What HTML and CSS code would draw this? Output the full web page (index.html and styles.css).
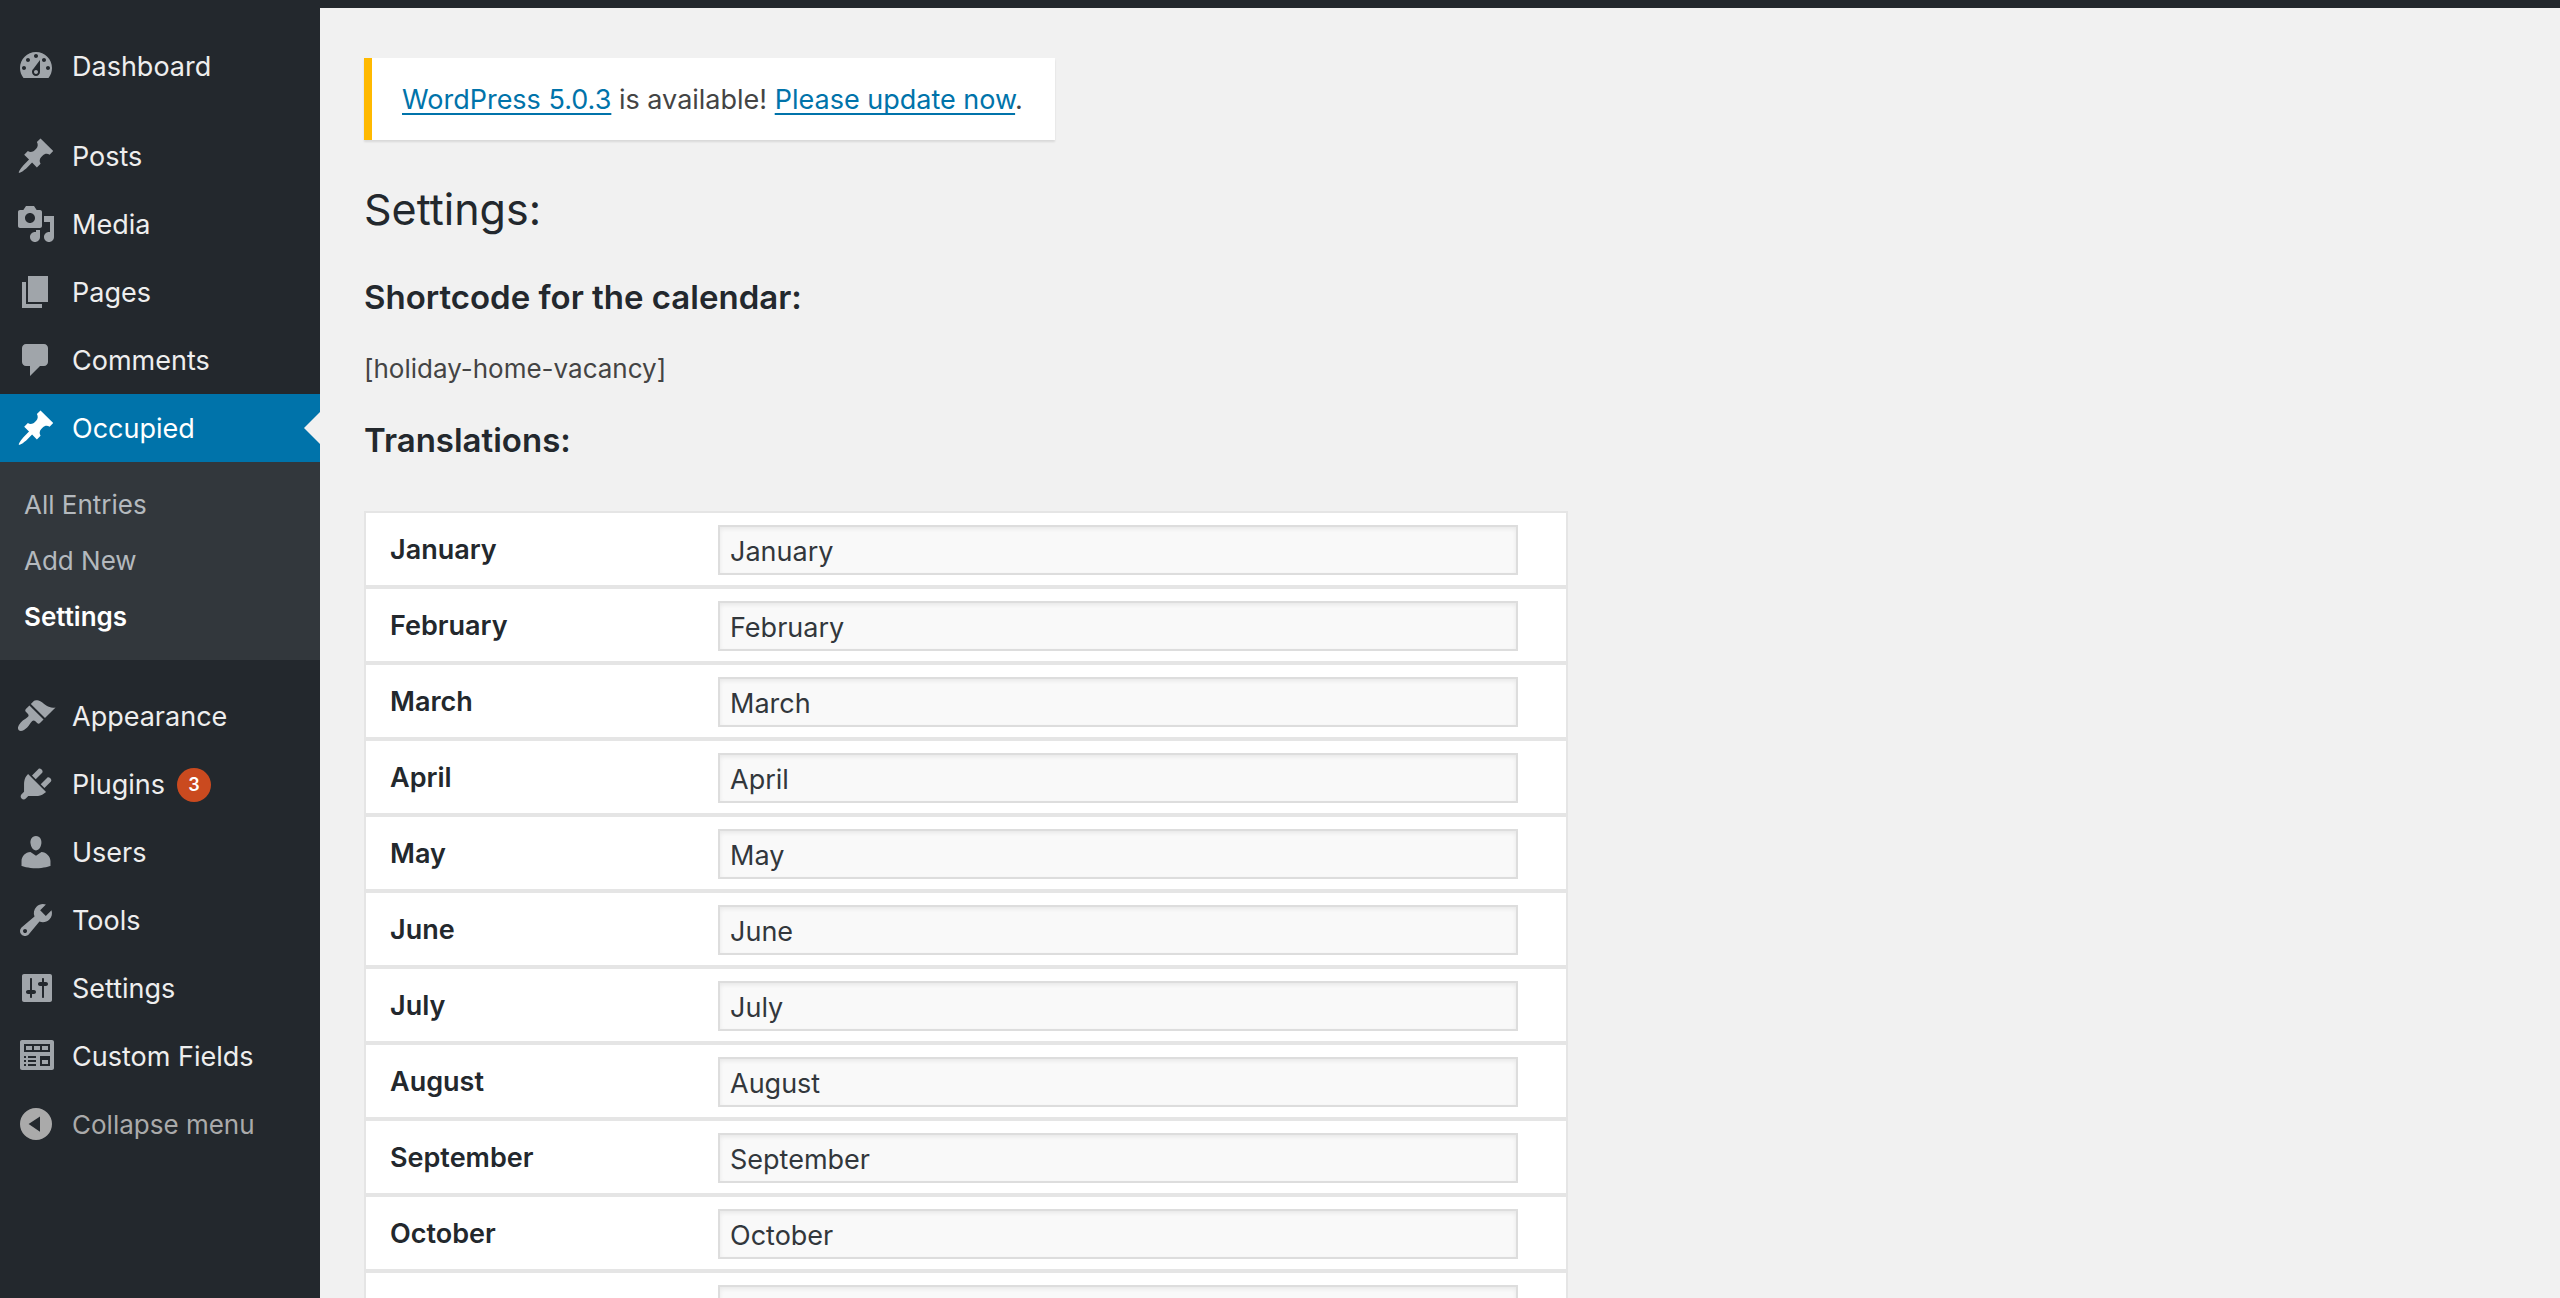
FILE: index.html
```html
<!DOCTYPE html>
<html lang="en">
<head>
<meta charset="utf-8">
<title>Settings</title>
<link rel="stylesheet" href="styles.css">
</head>
<body>
<div class="toolbar"></div>
<div class="layout">
  <nav class="sidebar" aria-label="Main menu">
    <ul class="menu">
      <li><a class="menu-link" href="#"><svg class="icon" viewBox="0 0 20 20" aria-hidden="true"><path fill-rule="evenodd" d="M3.76 16h12.48c1.1-1.37 1.76-3.11 1.76-5 0-4.42-3.58-8-8-8s-8 3.58-8 8c0 1.89.66 3.63 1.76 5zM10 4c.55 0 1 .45 1 1s-.45 1-1 1-1-.45-1-1 .45-1 1-1zM6 6c.55 0 1 .45 1 1s-.45 1-1 1-1-.45-1-1 .45-1 1-1zm8 0c.55 0 1 .45 1 1s-.45 1-1 1-1-.45-1-1 .45-1 1-1zm-5.370 5.550L12 7v6c0 1.100-.9 2-2 2s-2-.9-2-2c0-.57.24-1.080.63-1.450zM4 10c.55 0 1 .45 1 1s-.45 1-1 1-1-.45-1-1 .45-1 1-1zm12 0c.55 0 1 .45 1 1s-.45 1-1 1-1-.45-1-1 .45-1 1-1zm-5 3c0-.55-.45-1-1-1s-1 .45-1 1 .45 1 1 1 1-.45 1-1z"/></svg><span class="label">Dashboard</span></a></li>
      <li class="group-start"><a class="menu-link" href="#"><svg class="icon" viewBox="0 0 20 20" aria-hidden="true"><path d="M10.440 3.020l1.820-1.820 6.360 6.350-1.830 1.820c-1.050-.68-2.480-.57-3.410.36l-.75.75c-.92.93-1.040 2.350-.35 3.410l-1.830 1.820-2.410-2.410-2.800 2.790c-.42.42-3.380 2.710-3.800 2.290s1.860-3.390 2.280-3.810l2.790-2.790L4.100 9.360l1.830-1.820c1.050.69 2.480.57 3.400-.36l.75-.75c.93-.92 1.050-2.350.36-3.410z"/></svg><span class="label">Posts</span></a></li>
      <li><a class="menu-link" href="#"><svg class="icon" viewBox="0 0 20 20" aria-hidden="true"><path fill-rule="evenodd" d="M13 11V4c0-.55-.45-1-1-1h-1.670L9 1H5L3.670 3H2c-.55 0-1 .45-1 1v7c0 .55.45 1 1 1h10c.55 0 1-.45 1-1zM7 4.500c1.380 0 2.500 1.120 2.500 2.500S8.380 9.500 7 9.500 4.500 8.380 4.500 7 5.620 4.500 7 4.500zM14 6h5v10.500c0 1.380-1.120 2.500-2.500 2.500S14 17.880 14 16.500s1.120-2.500 2.500-2.500c.17 0 .34.02.5.05V9h-3V6zm-4 8.050V13h2v3.500c0 1.380-1.120 2.500-2.500 2.500S7 17.880 7 16.500 8.120 14 9.500 14c.17 0 .34.02.5.05z"/></svg><span class="label">Media</span></a></li>
      <li><a class="menu-link" href="#"><svg class="icon" viewBox="0 0 20 20" aria-hidden="true"><path d="M6 15V2h10v13H6zm-1 1h8v2H3V5h2v11z"/></svg><span class="label">Pages</span></a></li>
      <li><a class="menu-link" href="#"><svg class="icon" viewBox="0 0 20 20" aria-hidden="true"><path d="M5 2h9c1.100 0 2 .9 2 2v7c0 1.100-.9 2-2 2h-2l-5 5v-5H5c-1.100 0-2-.9-2-2V4c0-1.100.9-2 2-2z"/></svg><span class="label">Comments</span></a></li>
      <li><a class="menu-link current" href="#"><svg class="icon" viewBox="0 0 20 20" aria-hidden="true"><path d="M10.440 3.020l1.820-1.820 6.360 6.350-1.830 1.820c-1.050-.68-2.480-.57-3.410.36l-.75.75c-.92.93-1.040 2.350-.35 3.410l-1.830 1.820-2.410-2.410-2.800 2.790c-.42.42-3.380 2.710-3.800 2.290s1.860-3.390 2.280-3.810l2.790-2.790L4.100 9.360l1.830-1.820c1.050.69 2.480.57 3.400-.36l.75-.75c.93-.92 1.050-2.350.36-3.410z"/></svg><span class="label">Occupied</span></a>
        <ul class="submenu">
          <li><a href="#">All Entries</a></li>
          <li><a href="#">Add New</a></li>
          <li><a class="active" href="#" aria-current="page">Settings</a></li>
        </ul>
      </li>
      <li class="group-start"><a class="menu-link" href="#"><svg class="icon" viewBox="0 0 20 20" aria-hidden="true"><path d="M14.480 11.060L7.410 3.990l1.500-1.500c.5-.56 2.300-.47 3.510.32 1.210.8 1.430 1.280 2.910 2.100 1.180.64 2.450 1.260 4.450.85zm-.71.71L6.700 4.700 4.930 6.470c-.39.39-.39 1.020 0 1.410l1.060 1.060c.39.39.39 1.030 0 1.420-.6.6-1.430 1.110-2.210 1.690-.35.26-.7.53-1.010.84C1.430 14.230.4 16.080 1.400 17.070c.99 1 2.840-.03 4.180-1.360.31-.31.58-.66.85-1.020.57-.78 1.080-1.610 1.690-2.210.39-.39 1.020-.39 1.410 0l1.060 1.060c.39.39 1.020.39 1.410 0z"/></svg><span class="label">Appearance</span></a></li>
      <li><a class="menu-link" href="#"><svg class="icon" viewBox="0 0 20 20" aria-hidden="true"><path d="M13.110 4.360L9.870 7.600 8 5.730l3.240-3.240c.35-.34 1.050-.2 1.560.32.52.51.66 1.210.31 1.550zm-8 1.770l.91-1.120 9.010 9.010-1.190.84c-.71.71-2.630 1.160-3.820 1.160H6.140L4.900 17.260c-.59.59-1.540.59-2.120 0-.59-.58-.59-1.530 0-2.120l1.240-1.240v-3.880c0-1.130.4-3.190 1.090-3.890zm7.260 3.970l3.240-3.240c.34-.35 1.040-.21 1.550.31.52.51.66 1.210.31 1.550l-3.240 3.250z"/></svg><span class="label">Plugins</span><span class="badge">3</span></a></li>
      <li><a class="menu-link" href="#"><svg class="icon" viewBox="0 0 20 20" aria-hidden="true"><path d="M10 9.250c-2.270 0-2.730-3.440-2.730-3.440C7 4.020 7.820 2 9.970 2c2.160 0 2.980 2.020 2.710 3.810 0 0-.41 3.440-2.680 3.440zm0 2.570L12.720 10c2.390 0 4.520 2.330 4.520 4.530v2.490s-3.650 1.130-7.240 1.130c-3.650 0-7.240-1.130-7.240-1.130v-2.490c0-2.250 1.940-4.480 4.470-4.480z"/></svg><span class="label">Users</span></a></li>
      <li><a class="menu-link" href="#"><svg class="icon" viewBox="0 0 20 20" aria-hidden="true"><path fill-rule="evenodd" d="M16.680 9.770c-1.340 1.340-3.300 1.670-4.950.99l-5.410 6.520c-.99.99-2.590.99-3.580 0s-.99-2.590 0-3.570l6.520-5.420c-.68-1.650-.35-3.610.99-4.950 1.280-1.280 3.120-1.620 4.720-1.060l-2.890 2.890 2.820 2.820 2.860-2.870c.53 1.580.18 3.390-1.080 4.650zM3.810 16.210c.4.39 1.040.39 1.430 0 .4-.4.4-1.040 0-1.430-.39-.4-1.030-.4-1.430 0-.39.39-.39 1.030 0 1.430z"/></svg><span class="label">Tools</span></a></li>
      <li><a class="menu-link" href="#"><svg class="icon" viewBox="0 0 20 20" aria-hidden="true"><path fill-rule="evenodd" d="M18 16V4c0-.55-.45-1-1-1H4c-.55 0-1 .45-1 1v12c0 .55.45 1 1 1h13c.55 0 1-.45 1-1zM8 11h1c.55 0 1 .45 1 1s-.45 1-1 1H8v1.500c0 .28-.22.5-.5.5s-.5-.22-.5-.5V13H6c-.55 0-1-.45-1-1s.45-1 1-1h1V5.500c0-.28.22-.5.5-.5s.5.22.5.5V11zm5-2h-1c-.55 0-1-.45-1-1s.45-1 1-1h1V5.500c0-.28.22-.5.5-.5s.5.22.5.5V7h1c.55 0 1 .45 1 1s-.45 1-1 1h-1v5.500c0 .28-.22.5-.5.5s-.5-.22-.5-.5V9z"/></svg><span class="label">Settings</span></a></li>
      <li><a class="menu-link" href="#"><svg class="icon" viewBox="0 0 20 20" aria-hidden="true"><path fill-rule="evenodd" d="M19 16V3c0-.55-.45-1-1-1H3c-.55 0-1 .45-1 1v13c0 .55.45 1 1 1h15c.55 0 1-.45 1-1zM4 4h13v4H4V4zm1 1v2h3V5H5zm4 0v2h3V5H9zm4 0v2h3V5h-3zM4 10h1v1H4zM6 10h4v1H6zM12 10h5v5h-5zM4 12h1v1H4zM6 12h4v1H6zM13 12v2h3v-2zM4 14h1v1H4zM6 14h4v1H6z"/></svg><span class="label">Custom Fields</span></a></li>
      <li><button class="menu-link collapse" type="button"><svg class="icon" viewBox="0 0 20 20" aria-hidden="true"><path fill-rule="evenodd" d="M10 2a8 8 0 1 0 0 16a8 8 0 1 0 0-16zM12 6.200v7.700L6.300 10z"/></svg><span class="label">Collapse menu</span></button></li>
    </ul>
  </nav>
  <main class="content">
    <div class="notice"><a href="#">WordPress 5.0.3</a> is available! <a href="#">Please update now</a>.</div>
    <h1>Settings:</h1>
    <h2>Shortcode for the calendar:</h2>
    <p>[holiday-home-vacancy]</p>
    <h2>Translations:</h2>
    <table class="form-table">
      <tbody>
        <tr><th scope="row"><label for="m1">January</label></th><td><input id="m1" type="text" value="January"></td></tr>
        <tr><th scope="row"><label for="m2">February</label></th><td><input id="m2" type="text" value="February"></td></tr>
        <tr><th scope="row"><label for="m3">March</label></th><td><input id="m3" type="text" value="March"></td></tr>
        <tr><th scope="row"><label for="m4">April</label></th><td><input id="m4" type="text" value="April"></td></tr>
        <tr><th scope="row"><label for="m5">May</label></th><td><input id="m5" type="text" value="May"></td></tr>
        <tr><th scope="row"><label for="m6">June</label></th><td><input id="m6" type="text" value="June"></td></tr>
        <tr><th scope="row"><label for="m7">July</label></th><td><input id="m7" type="text" value="July"></td></tr>
        <tr><th scope="row"><label for="m8">August</label></th><td><input id="m8" type="text" value="August"></td></tr>
        <tr><th scope="row"><label for="m9">September</label></th><td><input id="m9" type="text" value="September"></td></tr>
        <tr><th scope="row"><label for="m10">October</label></th><td><input id="m10" type="text" value="October"></td></tr>
        <tr><th scope="row"><label for="m11">November</label></th><td><input id="m11" type="text" value="November"></td></tr>
      </tbody>
    </table>
  </main>
</div>
</body>
</html>
```
FILE: styles.css
```css
* { box-sizing: border-box; }

body {
  display: flex;
  flex-direction: column;
  height: 100vh;
  margin: 0;
  overflow: hidden;
  background: #f1f1f1;
  color: #444;
  font-family: Inter, "Liberation Sans", sans-serif;
  font-size: 27px;
  line-height: 38px;
}

.toolbar { flex: none; height: 8px; background: #23282d; }

.layout { display: flex; flex: 1; min-height: 0; }

.sidebar { flex: none; width: 320px; padding-top: 24px; background: #23282d; }

.menu, .submenu { margin: 0; padding: 0; list-style: none; }

.group-start { margin-top: 22px; }

.menu-link {
  position: relative;
  display: flex;
  align-items: center;
  width: 100%;
  height: 68px;
  padding: 0 0 0 16px;
  border: 0;
  background: none;
  color: #eee;
  font: inherit;
  text-align: left;
  text-decoration: none;
}

.label { padding-top: 2px; }

.icon { width: 40px; height: 40px; margin-right: 16px; fill: #a0a5aa; }

.current { background: #0073aa; color: #fff; }
.current .icon { fill: #fff; }
.current::after {
  content: "";
  position: absolute;
  top: 18px;
  right: 0;
  border: 16px solid transparent;
  border-left-width: 0;
  border-right-color: #f1f1f1;
}

.submenu { padding: 15px 24px; background: #32373c; font-size: 26px; }
.submenu a { display: block; color: #b4b9be; line-height: 56px; text-decoration: none; }
.submenu .active { color: #fff; font-weight: 600; }

.badge {
  width: 34px;
  height: 34px;
  margin-top: 2px;
  margin-left: 12px;
  border-radius: 50%;
  background: #ca4a1f;
  color: #fff;
  font-size: 18px;
  font-weight: 600;
  line-height: 34px;
  text-align: center;
}

.collapse { color: #aaa; font-size: 26px; }
.collapse .icon { fill: #aaa; }

.content { flex: 1; min-width: 0; padding: 50px 44px 0; }

.notice {
  width: fit-content;
  padding: 23px 32px 21px 30px;
  border-left: 8px solid #ffb900;
  background: #fff;
  box-shadow: 0 2px 2px rgba(0, 0, 0, .1);
}
.notice a {
  color: #0073aa;
  text-decoration: underline;
  text-decoration-thickness: 2px;
  text-underline-offset: 4px;
  text-decoration-skip-ink: none;
}

h1 { margin: 40px 0; color: #23282d; font-size: 43px; font-weight: 400; line-height: 58px; }
h2 { margin: 0; color: #23282d; font-size: 33px; font-weight: 600; line-height: 38px; }
p { margin: 34px 0 33px; font-size: 26px; }

.form-table {
  width: 100%;
  max-width: 1204px;
  margin-top: 52px;
  border: 2px solid #e5e5e5;
  border-spacing: 0;
  background: #fff;
}
.form-table th, .form-table td { padding: 12px 0 10px 24px; border-bottom: 4px solid #e5e5e5; }
.form-table th { width: 328px; color: #23282d; font-weight: 600; text-align: left; }
.form-table td { padding-right: 48px; }

.form-table input {
  display: block;
  width: 100%;
  height: 50px;
  padding: 2px 10px 0;
  border: 2px solid #ddd;
  background: #f9f9f9;
  box-shadow: inset 0 2px 4px rgba(0, 0, 0, .07);
  color: #32373c;
  font: inherit;
}
```
